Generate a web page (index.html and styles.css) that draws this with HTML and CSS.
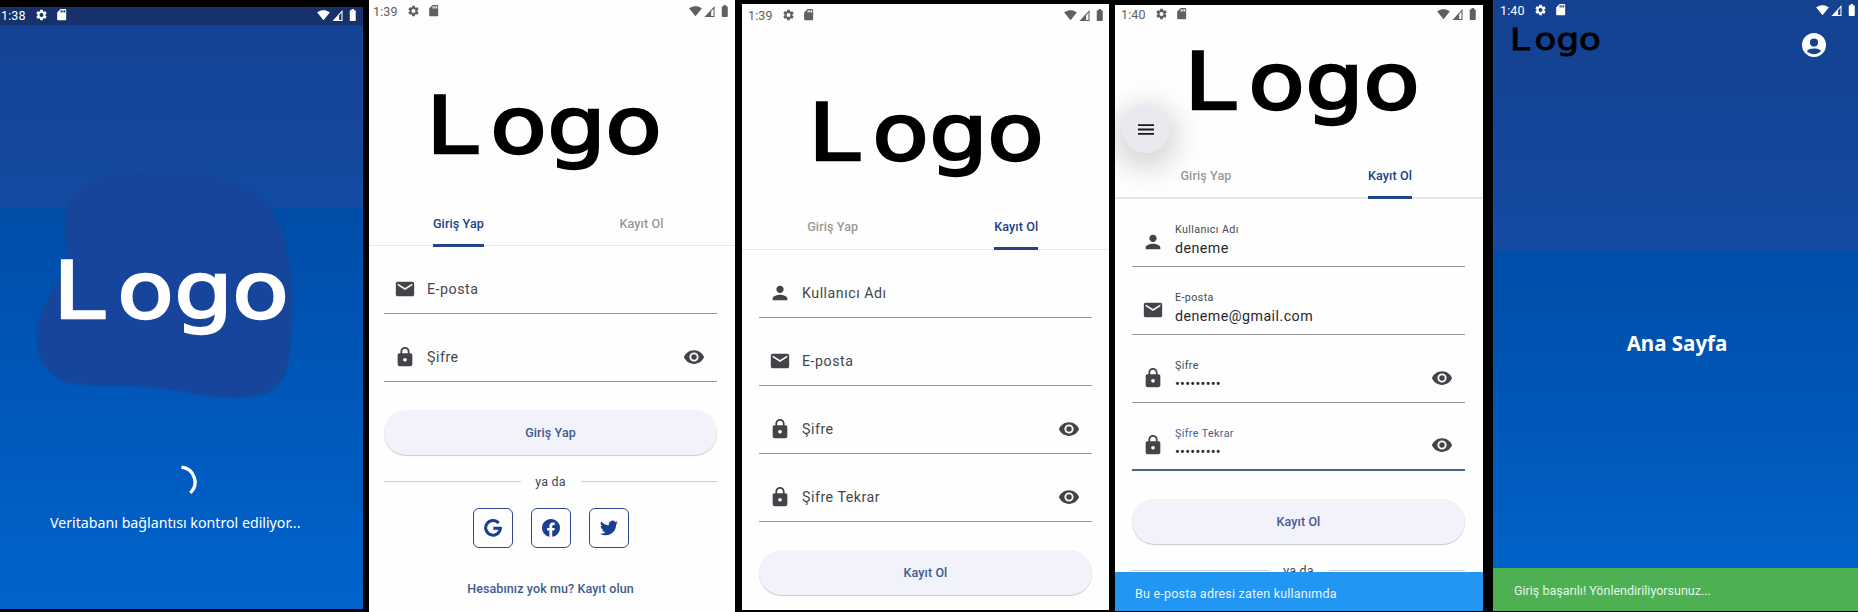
FILE: index.html
```html
<!DOCTYPE html>
<html lang="tr">
<head>
<meta charset="utf-8">
<title>Logo</title>
<link rel="stylesheet" href="styles.css">
</head>
<body>
<svg class="sprite" aria-hidden="true">
  <symbol id="gear" viewBox="2 2 20 20"><path d="M19.14 12.94c.04-.3.06-.61.06-.94 0-.32-.02-.64-.07-.94l2.03-1.58a.49.49 0 0 0 .12-.61l-1.92-3.32a.49.49 0 0 0-.59-.22l-2.39.96a7 7 0 0 0-1.62-.94l-.36-2.54a.48.48 0 0 0-.48-.41h-3.84a.47.47 0 0 0-.47.41l-.36 2.54c-.59.24-1.13.57-1.62.94l-2.39-.96a.48.48 0 0 0-.59.22L2.74 8.87a.47.47 0 0 0 .12.61l2.03 1.58c-.05.3-.09.63-.09.94s.02.64.07.94l-2.03 1.58a.49.49 0 0 0-.12.61l1.92 3.32c.12.22.37.29.59.22l2.39-.96c.5.38 1.03.7 1.62.94l.36 2.54c.05.24.24.41.48.41h3.84c.24 0 .44-.17.47-.41l.36-2.54c.59-.24 1.13-.56 1.62-.94l2.39.96c.22.08.47 0 .59-.22l1.92-3.32a.47.47 0 0 0-.12-.61zM12 15.6A3.6 3.6 0 1 1 12 8.4a3.6 3.6 0 0 1 0 7.2z"/></symbol>
  <symbol id="sd" viewBox="4 2 16 20"><path d="M18 2h-8L4.02 8 4 20c0 1.1.9 2 2 2h12a2 2 0 0 0 2-2V4a2 2 0 0 0-2-2zm-6 6h-2V4h2zm3 0h-2V4h2zm3 0h-2V4h2z"/></symbol>
  <symbol id="wifi" viewBox="0 3 24 19"><path d="M12.01 21.49 23.64 7c-.45-.34-4.93-4-11.64-4C5.28 3 .81 6.66.36 7l11.63 14.49z"/></symbol>
  <symbol id="signal" viewBox="0 0 11 12"><path fill-rule="evenodd" d="M0 12 11 0v12zM7.3 5.6v5.2h2.5V2.9z"/></symbol>
  <symbol id="battery" viewBox="7 2 10 20"><path d="M15.67 4H14V2h-4v2H8.33C7.6 4 7 4.6 7 5.33v15.33C7 21.4 7.6 22 8.33 22h7.33c.74 0 1.34-.6 1.34-1.33V5.33C17 4.6 16.4 4 15.67 4z"/></symbol>
  <symbol id="mail" viewBox="0 0 24 24"><path d="M20 4H4c-1.1 0-1.99.9-1.99 2L2 18c0 1.1.9 2 2 2h16c1.1 0 2-.9 2-2V6c0-1.1-.9-2-2-2zm0 4-8 5-8-5V6l8 5 8-5z"/></symbol>
  <symbol id="lock" viewBox="0 0 24 24"><path d="M18 8h-1V6c0-2.76-2.24-5-5-5S7 3.24 7 6v2H6c-1.1 0-2 .9-2 2v10c0 1.1.9 2 2 2h12c1.1 0 2-.9 2-2V10c0-1.1-.9-2-2-2zm-6 9c-1.1 0-2-.9-2-2s.9-2 2-2 2 .9 2 2-.9 2-2 2zm3.1-9H8.9V6c0-1.71 1.39-3.1 3.1-3.1s3.1 1.39 3.1 3.1z"/></symbol>
  <symbol id="eye" viewBox="0 0 24 24"><path d="M12 4.5C7 4.5 2.73 7.61 1 12c1.73 4.39 6 7.5 11 7.5s9.27-3.11 11-7.5c-1.73-4.39-6-7.5-11-7.5zM12 17a5 5 0 1 1 0-10 5 5 0 0 1 0 10zm0-8a3 3 0 1 0 0 6 3 3 0 0 0 0-6z"/></symbol>
  <symbol id="person" viewBox="0 0 24 24"><path d="M12 12c2.21 0 4-1.79 4-4s-1.79-4-4-4-4 1.79-4 4 1.79 4 4 4zm0 2c-2.67 0-8 1.34-8 4v2h16v-2c0-2.66-5.33-4-8-4z"/></symbol>
  <symbol id="account" viewBox="2 2 20 20"><path d="M12 2a10 10 0 1 0 0 20 10 10 0 0 0 0-20zm0 4.6a3.4 3.4 0 1 1 0 6.8 3.4 3.4 0 0 1 0-6.8zm0 13.1c-2.3 0-4.6-1-5.9-2.6.8-1.5 3.9-2.1 5.9-2.1s5.1.6 5.9 2.1c-1.300 1.600-3.600 2.600-5.900 2.600z"/></symbol>
  <symbol id="menu" viewBox="3 6 18 12"><path d="M3 18h18v-2H3zm0-5h18v-2H3zm0-7v2h18V6z"/></symbol>
  <symbol id="google" viewBox="0 0 18 18"><path fill="none" stroke="currentColor" stroke-width="3" d="M14.6 4.1A7.3 7.3 0 1 0 16.300 9.300H9.300"/></symbol>
  <symbol id="facebook" viewBox="2 2 20 20"><path d="M22 12a10 10 0 1 0-11.800 9.850V14.900H7.700V12h2.500V9.800c0-2.500 1.500-3.900 3.800-3.900 1.100 0 2.200.2 2.200.2v2.450H15c-1.250 0-1.650.8-1.650 1.600V12h2.800l-.45 2.900h-2.350v6.950A10 10 0 0 0 22 12z"/></symbol>
  <symbol id="twitter" viewBox="0 2 24 20"><path d="M24 4.600a10 10 0 0 1-2.800.8 5 5 0 0 0 2.200-2.700c-1 .6-2 1-3.100 1.200a4.900 4.900 0 0 0-8.400 4.500A14 14 0 0 1 1.700 3.200a4.900 4.900 0 0 0 1.500 6.500 4.900 4.900 0 0 1-2.200-.6v.1a4.900 4.900 0 0 0 3.900 4.800 5 5 0 0 1-2.200.1 4.900 4.900 0 0 0 4.600 3.400A9.900 9.900 0 0 1 0 19.500a13.900 13.900 0 0 0 7.500 2.200c9.100 0 14-7.500 14-14v-.6A10 10 0 0 0 24 4.600z"/></symbol>
</svg>

<main class="board">
  <section class="phone splash">
    <header class="status">
      <span class="time">1:38</span><svg class="s-gear"><use href="#gear"/></svg><svg class="s-sd"><use href="#sd"/></svg>
      <svg class="s-wifi"><use href="#wifi"/></svg><svg class="s-signal"><use href="#signal"/></svg><svg class="s-battery"><use href="#battery"/></svg>
    </header>
    <svg class="blob" viewBox="0 0 260 230"><path d="M28 45C35 15 60 3 110 2C165-2 205 6 229 35C252 62 257 105 255 145C254 180 253 205 238 218C220 233 180 228 135 220C90 213 55 219 27 212C9 203 0 188 0 173C0 145 12 125 24 105C37 85 24 68 28 45Z"/></svg>
    <svg class="logo" viewBox="0 0 226 80"><text transform="scale(1.17 1)" x="-6.7 48 96.7 146.300" y="58">Logo</text></svg>
    <svg class="spinner" viewBox="0 0 36 36"><path d="M19.500 3.100A15 15 0 0 1 28.300 28.900"/></svg>
    <p class="loading">Veritabanı bağlantısı kontrol ediliyor...</p>
  </section>

  <section class="phone login">
    <header class="status">
      <span class="time">1:39</span><svg class="s-gear"><use href="#gear"/></svg><svg class="s-sd"><use href="#sd"/></svg>
      <svg class="s-wifi"><use href="#wifi"/></svg><svg class="s-signal"><use href="#signal"/></svg><svg class="s-battery"><use href="#battery"/></svg>
    </header>
    <svg class="logo" viewBox="0 0 226 80"><text transform="scale(1.17 1)" x="-6.7 48 96.7 146.300" y="58">Logo</text></svg>
    <nav class="tabs"><a class="tab active"><span>Giriş Yap</span></a><a class="tab"><span>Kayıt Ol</span></a></nav>
    <form class="form">
      <div class="field"><svg class="icon"><use href="#mail"/></svg><label>E-posta</label></div>
      <div class="field"><svg class="icon"><use href="#lock"/></svg><label>Şifre</label><svg class="icon"><use href="#eye"/></svg></div>
      <div class="button">Giriş Yap</div>
      <div class="or"><span>ya da</span></div>
      <div class="social">
        <a><svg class="g"><use href="#google"/></svg></a>
        <a><svg class="f"><use href="#facebook"/></svg></a>
        <a><svg class="t"><use href="#twitter"/></svg></a>
      </div>
      <a class="signup">Hesabınız yok mu? Kayıt olun</a>
    </form>
  </section>

  <section class="phone register">
    <header class="status">
      <span class="time">1:39</span><svg class="s-gear"><use href="#gear"/></svg><svg class="s-sd"><use href="#sd"/></svg>
      <svg class="s-wifi"><use href="#wifi"/></svg><svg class="s-signal"><use href="#signal"/></svg><svg class="s-battery"><use href="#battery"/></svg>
    </header>
    <svg class="logo" viewBox="0 0 226 80"><text transform="scale(1.17 1)" x="-6.7 48 96.7 146.300" y="58">Logo</text></svg>
    <nav class="tabs"><a class="tab"><span>Giriş Yap</span></a><a class="tab active"><span>Kayıt Ol</span></a></nav>
    <form class="form">
      <div class="field"><svg class="icon"><use href="#person"/></svg><label>Kullanıcı Adı</label></div>
      <div class="field"><svg class="icon"><use href="#mail"/></svg><label>E-posta</label></div>
      <div class="field"><svg class="icon"><use href="#lock"/></svg><label>Şifre</label><svg class="icon"><use href="#eye"/></svg></div>
      <div class="field"><svg class="icon"><use href="#lock"/></svg><label>Şifre Tekrar</label><svg class="icon"><use href="#eye"/></svg></div>
      <div class="button">Kayıt Ol</div>
    </form>
  </section>

  <section class="phone filled">
    <header class="status">
      <span class="time">1:40</span><svg class="s-gear"><use href="#gear"/></svg><svg class="s-sd"><use href="#sd"/></svg>
      <svg class="s-wifi"><use href="#wifi"/></svg><svg class="s-signal"><use href="#signal"/></svg><svg class="s-battery"><use href="#battery"/></svg>
    </header>
    <svg class="logo" viewBox="0 0 226 80"><text transform="scale(1.17 1)" x="-6.7 48 96.7 146.300" y="58">Logo</text></svg>
    <nav class="tabs"><a class="tab"><span>Giriş Yap</span></a><a class="tab active"><span>Kayıt Ol</span></a></nav>
    <form class="form">
      <div class="field"><svg class="icon"><use href="#person"/></svg><div class="entry"><label>Kullanıcı Adı</label><span>deneme</span></div></div>
      <div class="field"><svg class="icon"><use href="#mail"/></svg><div class="entry"><label>E-posta</label><span>deneme@gmail.com</span></div></div>
      <div class="field"><svg class="icon"><use href="#lock"/></svg><div class="entry"><label>Şifre</label><span class="secret">•••••••••</span></div><svg class="icon"><use href="#eye"/></svg></div>
      <div class="field focused"><svg class="icon"><use href="#lock"/></svg><div class="entry"><label>Şifre Tekrar</label><span class="secret">•••••••••</span></div><svg class="icon"><use href="#eye"/></svg></div>
      <div class="button">Kayıt Ol</div>
      <div class="or"><span>ya da</span></div>
    </form>
    <div class="fab"><svg><use href="#menu"/></svg></div>
    <div class="snackbar info">Bu e-posta adresi zaten kullanımda</div>
  </section>

  <section class="phone home">
    <header class="status">
      <span class="time">1:40</span><svg class="s-gear"><use href="#gear"/></svg><svg class="s-sd"><use href="#sd"/></svg>
      <svg class="s-wifi"><use href="#wifi"/></svg><svg class="s-signal"><use href="#signal"/></svg><svg class="s-battery"><use href="#battery"/></svg>
    </header>
    <div class="appbar">
      <svg class="logo small" viewBox="0 0 226 80"><text transform="scale(1.17 1)" x="-6.7 48 96.7 146.300" y="58">Logo</text></svg>
      <svg class="account"><use href="#account"/></svg>
    </div>
    <h1 class="title">Ana Sayfa</h1>
    <div class="snackbar success">Giriş başarılı! Yönlendiriliyorsunuz...</div>
  </section>
</main>
</body>
</html>
```
FILE: styles.css
```css
* { box-sizing: border-box; }
body {
  margin: 0;
  background: #000;
  font-family: Roboto, "Liberation Sans", sans-serif;
  font-size: 12.500px;
  overflow: hidden;
}
svg { fill: currentColor; display: block; flex: none; }
.sprite { position: absolute; width: 0; height: 0; }
.board { display: flex; align-items: flex-start; width: 1858px; height: 612px; }

.phone {
  position: relative;
  display: flex;
  flex-direction: column;
  flex: none;
  overflow: hidden;
  background: #fefefe;
  color: #46474c;
}
.splash { width: 363px; height: 602px; margin-top: 7px; --left: 1px; --right: 7px; --logo-x: 61px; --logo-y: 235px; }
.login { width: 366px; height: 612px; margin-left: 6px; --left: 4px; --right: 7px; --side: 15px; --side-end: 18px; --logo-x: 65px; --logo-y: 73px; --shift: -2px; }
.register { width: 367px; height: 606px; margin: 4px 0 0 7px; --left: 6px; --right: 6px; --side: 17px; --side-end: 17px; --logo-x: 74px; --logo-y: 76px; --shift: -1px; }
.filled { width: 368px; height: 606px; margin: 5px 0 0 6px; --left: 6px; --right: 7px; --side: 17px; --side-end: 18px; --logo-x: 77px; --logo-y: 28px; --shift: -1px; }
.home { width: 365px; height: 611px; margin-left: 10px; --left: 7px; --right: 3px; }

.splash, .home { color: #fff; }
.splash { background: linear-gradient(#144293 0, #15479e 140px, #134ba2 200px, #004da8 201px, #0055b5 340px, #0064cc 602px); }
.home { background: linear-gradient(#144190 0, #15469b 160px, #134ba4 250px, #004eab 251px, #0053b1 350px, #0062c8 568px); }

/* status bar */
.status { display: flex; align-items: center; height: 22px; flex: none; padding: 0 var(--right) 0 var(--left); color: #606060; }
.time { width: 35px; font-size: 12.500px; letter-spacing: .1px; }
.s-gear { width: 11px; height: 12px; margin-right: 10px; }
.s-sd { width: 9.500px; height: 11.500px; }
.s-wifi { width: 13px; height: 11px; margin-left: auto; }
.s-signal { width: 11px; height: 11px; margin-left: 2px; }
.s-battery { width: 7.500px; height: 12px; margin-left: 6px; }
.splash .status { height: 18px; padding-bottom: 2px; background: #16316c; color: #fff; }
.filled .status { height: 18px; }
.home .status { height: 20px; color: #fff; }

/* wordmark */
.logo { width: 226px; height: 80px; margin: var(--logo-y) 0 0 var(--logo-x); overflow: visible; color: #000; }
.logo text { font-family: "DejaVu Sans", sans-serif; font-size: 79px; stroke: currentColor; stroke-width: 2.400px; }
.splash .logo { color: #fff; position: relative; }
.logo.small { width: 87px; height: 31px; margin: 0; }

/* splash */
.blob { position: absolute; left: 37px; top: 163px; width: 260px; height: 230px; color: #16459b; filter: blur(1px); }
.spinner { width: 36px; height: 36px; margin: 124px 0 0 162px; fill: none; stroke: #fff; stroke-width: 3.300px; }
.loading { margin: 12px 0 0 50px; font: 14.200px/22px "Noto Sans", sans-serif; white-space: nowrap; }

/* tabs */
.tabs { display: flex; height: 44px; flex: none; border-bottom: 2px solid #e4e6e7; padding-top: 13px; }
.login .tabs { margin-top: 28px; height: 43px; }
.register .tabs { margin-top: 24px; }
.login .tabs, .register .tabs { border-bottom-width: 1.500px; }
.filled .tabs { margin-top: 24px; }
.tab { flex: 1; display: flex; justify-content: center; color: #999; font-weight: 500; letter-spacing: .1px; }
.tab span { position: relative; left: var(--shift); height: 31px; line-height: 15px; font-size: 12.600px; }
.tab.active { color: #233f87; }
.tab.active span { border-bottom: 3px solid #234488; border-radius: 2px 2px 0 0; }

/* form */
.form { display: flex; flex-direction: column; padding: 0 var(--side-end) 0 var(--side); }
.field { display: flex; align-items: center; height: 50px; margin-top: 18px; padding: 0 12px 0 10px; border-bottom: 1px solid #999; flex: none; }
.icon { width: 22px; height: 22px; color: #42444a; }
.field label { flex: 1; margin-left: 11px; font-size: 14.250px; letter-spacing: .5px; }
.entry { flex: 1; display: flex; flex-direction: column; margin-left: 11px; }
.entry label { margin: 0; flex: none; font-size: 10.700px; line-height: 14px; letter-spacing: .4px; }
.entry span { color: #27282b; font-size: 14.250px; line-height: 23px; letter-spacing: .45px; }
.entry .secret { letter-spacing: .3px; }
.focused { border-bottom: 2px solid #4a6390; }
.focused label { color: #465f92; }
.button {
  display: flex; align-items: center; justify-content: center;
  height: 45px; margin-top: 28px; border-radius: 23px;
  background: #f1f2fa; color: #3f5b90; font-weight: 500; letter-spacing: .1px;
  box-shadow: 0 1px 1px #c9cad2;
}
.or { display: flex; align-items: center; justify-content: center; height: 20px; margin-top: 16px; letter-spacing: .2px; }
.or::before, .or::after { content: ""; flex: 1; height: 1px; background: #d0d0d2; }
.or span { width: 60px; text-align: center; }
.social { display: flex; justify-content: center; gap: 18px; margin-top: 17px; }
.social a { display: flex; align-items: center; justify-content: center; width: 40px; height: 40px; border: 1px solid #304a91; border-radius: 6px; color: #183f91; }
.social svg { width: 18px; height: 18px; }
.signup { margin-top: 33px; text-align: center; color: #3f5b90; font-weight: 500; letter-spacing: .1px; line-height: 15px; }

/* overlays */
.fab { position: absolute; left: 7px; top: 100px; width: 48px; height: 48px; border-radius: 50%; background: #e9eaf0; color: #17191e; display: flex; align-items: center; justify-content: center; box-shadow: 0 8px 28px 8px rgba(0, 0, 0, .16); }
.fab svg { width: 16px; height: 11px; }
.snackbar { position: absolute; left: 0; right: 0; bottom: 0; display: flex; align-items: center; padding-left: 20px; white-space: nowrap; }
.info { height: 39px; background: #2296f3; color: #e9f4fe; letter-spacing: .22px; padding-top: 3px; }
.success { height: 43px; background: #4db052; color: #e6f4e6; padding: 2px 0 0 21px; }

/* home */
.appbar { display: flex; justify-content: space-between; padding: 8px 32px 0 20px; }
.account { width: 24px; height: 24px; margin-top: 5px; }
.title { margin: 270px 0 0; padding-left: 3px; text-align: center; font: bold 20.500px/28px "Noto Sans", sans-serif; }
```
